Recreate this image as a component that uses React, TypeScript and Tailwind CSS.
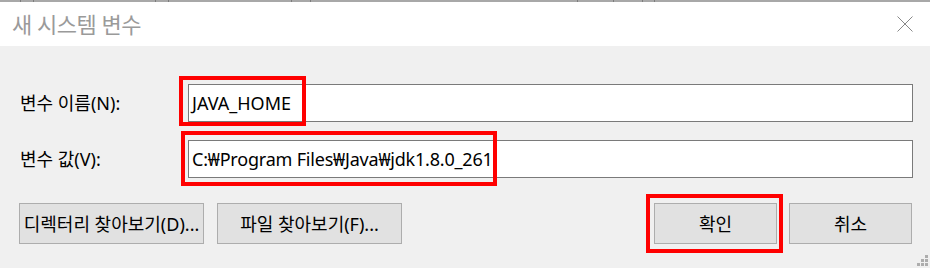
import React from "react";

const FONT = { fontFamily: '"Noto Sans", "Noto Sans CJK KR", sans-serif' };

function Btn({ w, children }: { w: string; children: React.ReactNode }) {
  return (
    <div
      className={`${w} h-[41px] bg-[#e1e1e1] border border-[#adadad] flex items-center justify-center text-[18px] text-black whitespace-nowrap leading-none`}
    >
      {children}
    </div>
  );
}

export default function App() {
  const ticks = [20, 33, 155, 168, 291, 310, 577, 613, 642, 654];
  return (
    <div className="relative w-[930px] h-[268px] bg-[#f0f0f0] overflow-hidden" style={FONT}>
      <svg width="930" height="2" className="block">
        <rect x="0" y="0" width="930" height="2" fill="#a8a8a8" />
        {ticks.map((x) => (
          <rect key={x} x={x} y="0" width="1" height="2" fill="#7c7c7c" />
        ))}
      </svg>
      <div className="h-[44px] bg-white flex items-center justify-between pl-[12px] pr-[17px]">
        <span className="text-[22px] text-[#9a9a9a] leading-none tracking-[-0.5px]">새 시스템 변수</span>
        <svg width="16" height="16" viewBox="0 0 16 16">
          <path d="M0.5 0.5 L15.5 15.5 M15.5 0.5 L0.5 15.5" stroke="#888" strokeWidth="1" fill="none" />
        </svg>
      </div>
      <div className="pt-[38px] pl-[20px] pr-[17px]">
        <div className="flex items-center h-[38px]">
          <div className="w-[168px] text-[18px] text-black leading-none">변수 이름(N):</div>
          <div className="flex-1 h-[38px] bg-white border border-[#7a7a7a] flex items-center pl-[3px] text-[18px] text-black leading-none">
            JAVA_HOME
          </div>
        </div>
        <div className="flex items-center h-[38px] mt-[18px]">
          <div className="w-[168px] text-[18px] text-black leading-none">변수 값(V):</div>
          <div className="flex-1 h-[38px] bg-white border border-[#7a7a7a] flex items-center pl-[3px] text-[18px] text-black leading-none whitespace-nowrap tracking-[-0.2px]">
            C:₩Program Files₩Java₩jdk1.8.0_261
          </div>
        </div>
      </div>
      <div className="flex items-center mt-[25px] pl-[19px] pr-[18px]">
        <div className="flex gap-[13px]">
          <Btn w="w-[185px]">디렉터리 찾아보기(D)...</Btn>
          <Btn w="w-[185px]">파일 찾아보기(F)...</Btn>
        </div>
        <div className="flex gap-[12px] ml-auto">
          <Btn w="w-[123px]">확인</Btn>
          <Btn w="w-[123px]">취소</Btn>
        </div>
      </div>
      <svg width="12" height="12" className="absolute left-[917px] top-[255px]">
        <rect x="8" y="0" width="3" height="3" fill="#adadad" />
        <rect x="4" y="4" width="3" height="3" fill="#adadad" />
        <rect x="8" y="4" width="3" height="3" fill="#adadad" />
        <rect x="0" y="8" width="3" height="3" fill="#adadad" />
        <rect x="4" y="8" width="3" height="3" fill="#adadad" />
        <rect x="8" y="8" width="3" height="3" fill="#adadad" />
      </svg>
      <div className="absolute left-[179px] top-[76px] w-[127px] h-[50px] border-[4px] border-[#ff0000]" />
      <div className="absolute left-[181px] top-[131px] w-[316px] h-[55px] border-[4px] border-[#ff0000]" />
      <div className="absolute left-[646px] top-[194px] w-[137px] h-[59px] border-[4px] border-[#ff0000]" />
    </div>
  );
}
